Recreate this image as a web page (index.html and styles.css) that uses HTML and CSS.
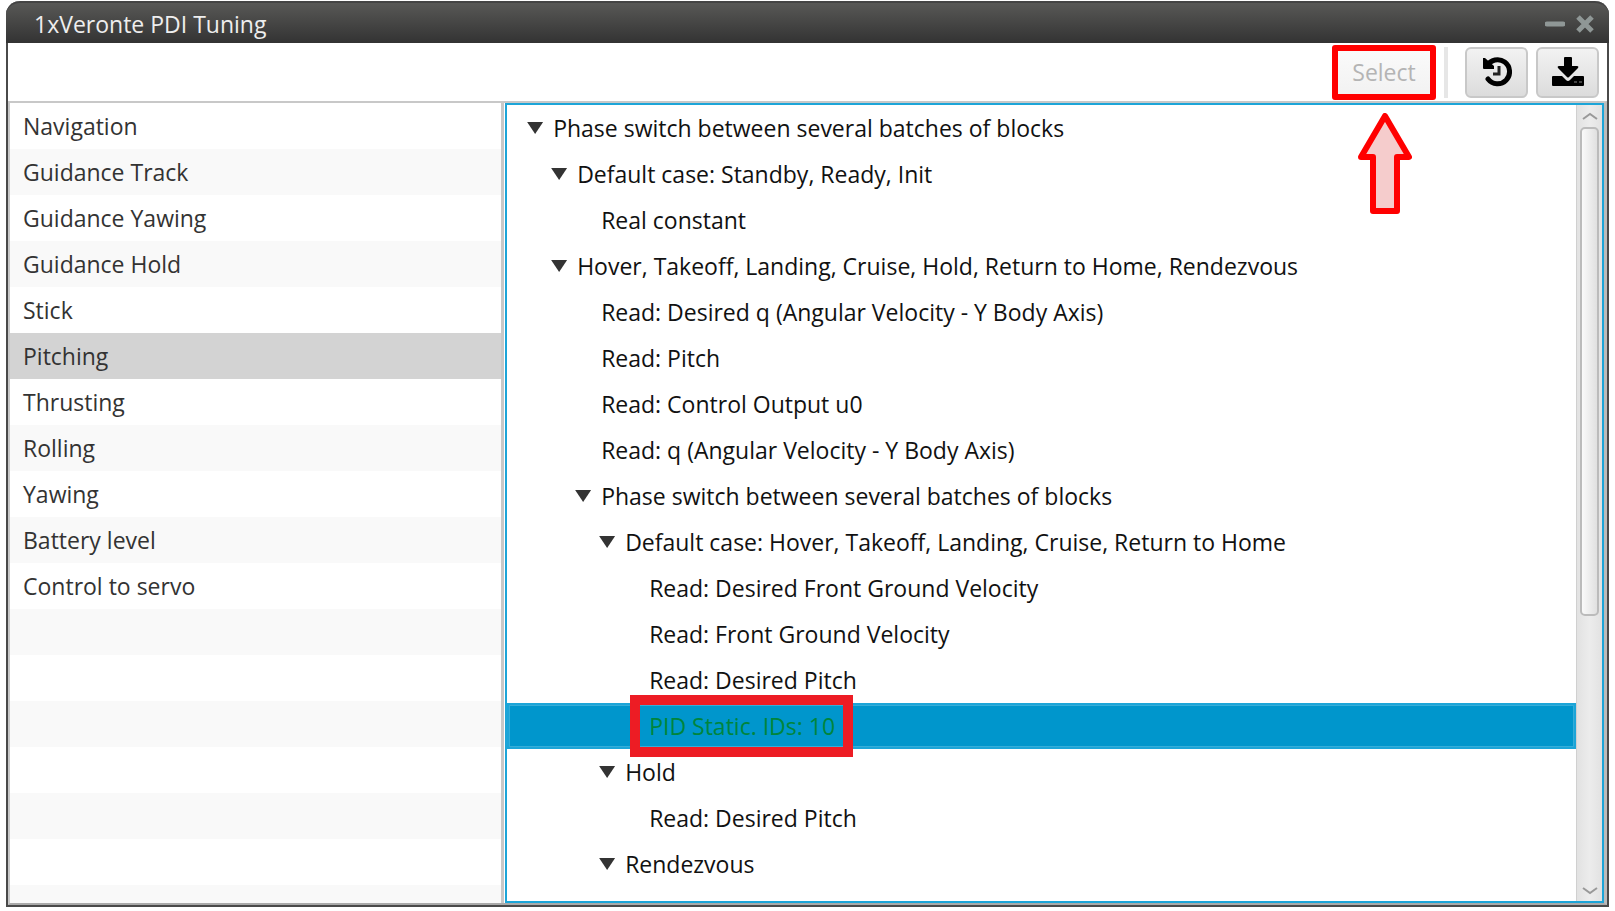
FILE: index.html
```html
<!DOCTYPE html>
<html lang="en">
<head>
	<meta charset="UTF-8">
	<meta name="viewport" content="width=device-width, initial-scale=1.0">
	<title>1xVeronte PDI Tuning</title>
	<link rel="stylesheet" href="styles.css">
</head>
<body>

<div class="window">
	<header class="titlebar">
		<h1>1xVeronte PDI Tuning</h1>
		<button class="winButton" aria-label="Minimize">
			<svg width="20" height="20" viewBox="0 0 20 20"><path d="M2 10H18" stroke="#8f9796" stroke-width="5" stroke-linecap="round"/></svg>
		</button>
		<button class="winButton" aria-label="Close">
			<svg width="20" height="20" viewBox="0 0 20 20"><path d="M3 3L17 17M17 3L3 17" stroke="#8f9796" stroke-width="5"/></svg>
		</button>
	</header>

	<div class="toolbar">
		<div class="selectBox">
			<button class="select" disabled>Select</button>
			<svg class="arrow" width="54" height="102" viewBox="0 0 54 102"><path d="M27 3L51 44H39V98H15V44H3Z" fill="#f5cccc" stroke="#f00" stroke-width="6" stroke-linejoin="round"/></svg>
		</div>
		<div class="separator"></div>
		<button class="tool" aria-label="History">
			<svg width="30" height="30" viewBox="0 0 30 30">
				<path d="M5 9A12 12 0 1 1 6 22" stroke="#000" stroke-width="5" stroke-linecap="round"/>
				<path d="M1 1H3L12 9V12H2Q1 12 1 11Z"/>
				<path d="M17 9V17H11" stroke="#222" stroke-width="3"/>
			</svg>
		</button>
		<button class="tool" aria-label="Save">
			<svg width="32" height="30" viewBox="0 0 32 30">
				<path d="M12 1Q12 0 13 0H19Q20 0 20 1V9H25Q27 9 26 11L17 20Q16 21 15 20L6 11Q5 9 7 9H12Z"/>
				<path d="M1 19H10L14 23Q16 25 18 23L22 19H31Q32 19 32 20V28Q32 29 31 29H1Q0 29 0 28V20Q0 19 1 19Z"/>
				<path d="M22 24H25V26H22ZM27 24H30V26H27Z" fill="#444"/>
			</svg>
		</button>
	</div>

	<main class="panes">
		<nav class="list">
			<button>Navigation</button>
			<button>Guidance Track</button>
			<button>Guidance Yawing</button>
			<button>Guidance Hold</button>
			<button>Stick</button>
			<button class="current">Pitching</button>
			<button>Thrusting</button>
			<button>Rolling</button>
			<button>Yawing</button>
			<button>Battery level</button>
			<button>Control to servo</button>
		</nav>

		<section class="treePane">
			<ul class="tree">
				<li><button class="row">Phase switch between several batches of blocks</button>
					<ul>
						<li><button class="row">Default case: Standby, Ready, Init</button>
							<ul>
								<li><span class="row">Real constant</span></li>
							</ul>
						</li>
						<li><button class="row">Hover, Takeoff, Landing, Cruise, Hold, Return to Home, Rendezvous</button>
							<ul>
								<li><span class="row">Read: Desired q (Angular Velocity - Y Body Axis)</span></li>
								<li><span class="row">Read: Pitch</span></li>
								<li><span class="row">Read: Control Output u0</span></li>
								<li><span class="row">Read: q (Angular Velocity - Y Body Axis)</span></li>
								<li><button class="row">Phase switch between several batches of blocks</button>
									<ul>
										<li><button class="row">Default case: Hover, Takeoff, Landing, Cruise, Return to Home</button>
											<ul>
												<li><span class="row">Read: Desired Front Ground Velocity</span></li>
												<li><span class="row">Read: Front Ground Velocity</span></li>
												<li><span class="row">Read: Desired Pitch</span></li>
												<li class="selected"><span class="row"><span class="mark">PID Static. IDs: 10</span></span></li>
											</ul>
										</li>
										<li><button class="row">Hold</button>
											<ul>
												<li><span class="row">Read: Desired Pitch</span></li>
											</ul>
										</li>
										<li><button class="row">Rendezvous</button></li>
									</ul>
								</li>
							</ul>
						</li>
					</ul>
				</li>
			</ul>
			<div class="scrollbar">
				<button aria-label="Scroll up"><svg width="16" height="8" viewBox="0 0 16 8"><path d="M1 7L8 2L15 7"/></svg></button>
				<div class="track"><div class="thumb"></div></div>
				<button aria-label="Scroll down"><svg width="16" height="8" viewBox="0 0 16 8"><path d="M1 1L8 6L15 1"/></svg></button>
			</div>
		</section>
	</main>
</div>

</body>
</html>
```

FILE: styles.css
```css
* {
	box-sizing: border-box;
}

body {
	margin: 0;
	padding: 1px 6px 4px;
	height: 100vh;
	background-color: #fff;
	font-family: "Open Sans", "Noto Sans", sans-serif;
	font-size: 23px;
	line-height: 46px;
	color: #111;
}

button {
	margin: 0;
	padding: 0;
	border: none;
	background: none;
	font: inherit;
	color: inherit;
}

svg {
	display: block;
	fill: none;
}

.window {
	display: flex;
	flex-direction: column;
	height: 100%;
	border: 2px solid #4a4a4a;
	border-top: none;
	border-radius: 14px 14px 0 0;
	background-color: #fff;
}

.titlebar {
	display: flex;
	align-items: center;
	gap: 10px;
	height: 42px;
	margin: 0 -2px;
	padding: 2px 14px 0 28px;
	border-top: 2px solid #444;
	border-radius: 14px 14px 0 0;
	background: linear-gradient(#585856, #333);
	color: #eee;
}

.titlebar h1 {
	flex: 1;
	margin: 0;
	font-size: 23px;
	font-weight: normal;
	line-height: 38px;
}

.toolbar {
	display: flex;
	align-items: center;
	gap: 8px;
	height: 58px;
	padding-right: 8px;
	justify-content: flex-end;
}

.selectBox {
	position: relative;
	border: 6px solid #f00;
	border-radius: 3px;
}

.select {
	display: block;
	width: 92px;
	height: 43px;
	background: linear-gradient(#fafafa, #f2f2f2);
	color: #b4b4b4;
	line-height: 40px;
}

.arrow {
	position: absolute;
	top: 62px;
	left: 20px;
	z-index: 1;
}

.separator {
	width: 4px;
	height: 51px;
	margin-right: 9px;
	background-color: #e6e6e6;
}

.tool {
	display: flex;
	align-items: center;
	justify-content: center;
	width: 63px;
	height: 51px;
	border: 2px solid #c8c8c8;
	border-radius: 6px;
	background: linear-gradient(#f2f2f2, #dcdcdc);
}

.tool svg {
	fill: #000;
}

.tool path[stroke] {
	fill: none;
}

.panes {
	flex: 1;
	display: flex;
	min-height: 0;
	border: 2px solid #c8c8c8;
	border-right: 3px solid #bbb;
	border-bottom-color: #aaa;
}

.list {
	width: 31%;
	border-right: 3px solid #c8c8c8;
	overflow: hidden;
	background: repeating-linear-gradient(#fff 0, #fff 46px, #f9f9f9 46px, #f9f9f9 92px);
	color: #333;
}

.list button {
	display: block;
	width: 100%;
	height: 46px;
	padding-left: 13px;
	text-align: left;
}

.list .current {
	background-color: #d3d3d3;
}

.treePane {
	flex: 1;
	display: flex;
	min-width: 0;
	margin-left: 1px;
	border: 2px solid #1ca5d8;
}

.tree {
	flex: 1;
	overflow: hidden;
	min-width: 0;
}

.tree, .tree ul {
	margin: 0;
	padding: 0;
	list-style: none;
}

/* each level pushes its rows 24px further in */
.tree {
	--indent: 20px;
}

.tree > li > ul {
	--indent: 44px;
}

.tree > li > ul > li > ul {
	--indent: 68px;
}

.tree > li > ul > li > ul ul {
	--indent: 92px;
}

.tree > li > ul > li > ul ul ul {
	--indent: 116px;
}

.row {
	display: flex;
	align-items: center;
	width: 100%;
	height: 46px;
	padding-left: var(--indent);
	white-space: nowrap;
}

.row::before {
	content: "";
	width: 16px;
	margin-right: 10px;
}

button.row::before {
	height: 12px;
	background-color: #333;
	clip-path: polygon(0 0, 100% 0, 50% 100%);
}

.selected {
	border: 2px solid #1ca5d8;
	background-color: #0096cc;
	color: #00853c;
}

.selected .row {
	height: 42px;
	padding-left: calc(var(--indent) - 3px);
	border: 1px solid #35add8;
}

.mark {
	position: relative;
}

.mark::after {
	content: "";
	position: absolute;
	inset: -8px -18px -8px -19px;
	border: 10px solid #ed1c24;
}

.scrollbar {
	display: flex;
	flex-direction: column;
	width: 26px;
	border-left: 1px solid #d0d0d0;
	background: linear-gradient(to right, #e2e2e2, #ececec 50%, #e2e2e2);
}

.scrollbar button {
	display: flex;
	align-items: center;
	justify-content: center;
	height: 21px;
}

.scrollbar svg {
	stroke: #999;
	stroke-width: 2;
}

.track {
	flex: 1;
	padding: 1px 3px;
}

.thumb {
	height: 65%;
	border: 2px solid #bbb;
	border-radius: 5px;
	background: linear-gradient(to right, #fafafa, #e0e0e0);
}
```
